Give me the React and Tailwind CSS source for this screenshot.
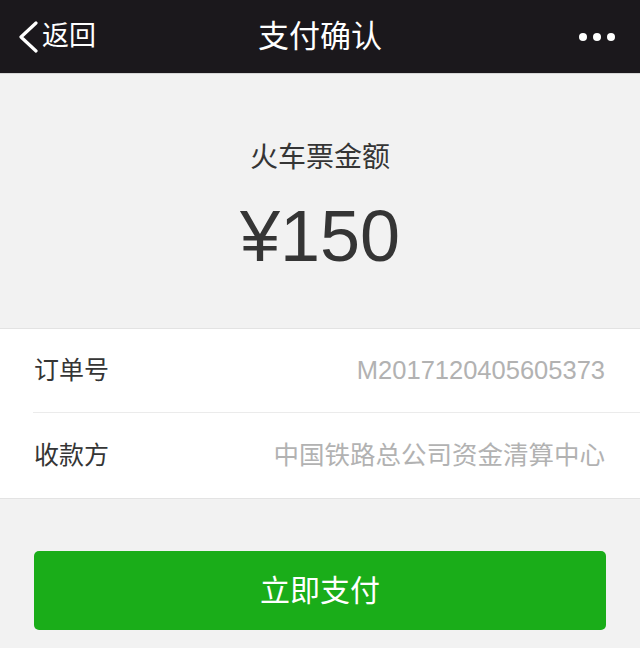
export default function App() {
  const font = { fontFamily: '"Liberation Sans", "Noto Sans CJK SC", sans-serif' }

  return (
    <div className="min-h-[648px] bg-[#f2f2f2]" style={font}>
      {/* nav bar */}
      <div className="h-[74px] bg-[#1b181c] grid grid-cols-3 items-center border-b border-[#d6d6d6]">
        <div className="flex items-center pl-[17px] text-white">
          <svg width="22" height="32" viewBox="0 0 22 32" fill="none">
            <path d="M19 2 L4 16 L19 30" stroke="white" strokeWidth="3.2" strokeLinecap="round" strokeLinejoin="round" />
          </svg>
          <span className="ml-[3px] text-[27px] leading-none">返回</span>
        </div>
        <div className="text-center text-white text-[31px] leading-none">支付确认</div>
        <div className="flex justify-end items-center gap-[6px] pr-[25px]">
          <span className="w-[8px] h-[8px] rounded-full bg-white" />
          <span className="w-[8px] h-[8px] rounded-full bg-white" />
          <span className="w-[8px] h-[8px] rounded-full bg-white" />
        </div>
      </div>

      {/* amount */}
      <div className="flex flex-col items-center pt-[64px] pb-[52px]">
        <div className="text-[28px] leading-[40px] text-[#353535]">火车票金额</div>
        <div className="mt-[18px] text-[72px] leading-[80px] text-[#353535]">¥150</div>
      </div>

      {/* details */}
      <div className="bg-white border-t border-b border-[#e3e3e3]">
        <div className="h-[83px] flex items-center justify-between pl-[34px] pr-[35px]">
          <span className="text-[25px] text-[#353535]">订单号</span>
          <span className="text-[25.5px] text-[#b2b2b2]">M2017120405605373</span>
        </div>
        <div className="ml-[33px] border-t border-[#ebebeb]" />
        <div className="h-[85px] flex items-center justify-between pl-[34px] pr-[35px]">
          <span className="text-[25px] text-[#353535]">收款方</span>
          <span className="text-[25.5px] text-[#b2b2b2]">中国铁路总公司资金清算中心</span>
        </div>
      </div>

      {/* pay button */}
      <div className="pt-[52px] px-[34px]">
        <button className="w-full h-[79px] rounded-[5px] bg-[#1aad19] text-white text-[30px]">
          立即支付
        </button>
      </div>
    </div>
  )
}
